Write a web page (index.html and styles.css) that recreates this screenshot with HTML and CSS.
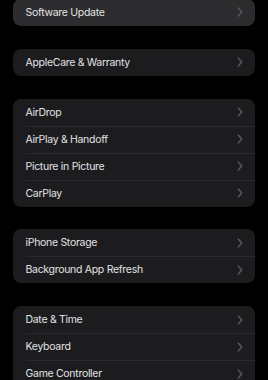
FILE: index.html
```html
<!DOCTYPE html>
<html lang="en">
<head>
<meta charset="utf-8">
<title>General</title>
<link rel="stylesheet" href="styles.css">
</head>
<body>
<main class="settings">
  <section class="group group--pressed">
    <div class="row"><span class="label">Software Update</span><svg class="chev" viewBox="0 0 6 10" width="6" height="10"><polyline points="1.2,1 4.8,5 1.2,9"/></svg></div>
  </section>
  <section class="group">
    <div class="row"><span class="label">AppleCare &amp; Warranty</span><svg class="chev" viewBox="0 0 6 10" width="6" height="10"><polyline points="1.2,1 4.8,5 1.2,9"/></svg></div>
  </section>
  <section class="group">
    <div class="row"><span class="label">AirDrop</span><svg class="chev" viewBox="0 0 6 10" width="6" height="10"><polyline points="1.2,1 4.8,5 1.2,9"/></svg></div>
    <div class="row"><span class="label">AirPlay &amp; Handoff</span><svg class="chev" viewBox="0 0 6 10" width="6" height="10"><polyline points="1.2,1 4.8,5 1.2,9"/></svg></div>
    <div class="row"><span class="label">Picture in Picture</span><svg class="chev" viewBox="0 0 6 10" width="6" height="10"><polyline points="1.2,1 4.8,5 1.2,9"/></svg></div>
    <div class="row"><span class="label">CarPlay</span><svg class="chev" viewBox="0 0 6 10" width="6" height="10"><polyline points="1.2,1 4.8,5 1.2,9"/></svg></div>
  </section>
  <section class="group">
    <div class="row"><span class="label">iPhone Storage</span><svg class="chev" viewBox="0 0 6 10" width="6" height="10"><polyline points="1.2,1 4.8,5 1.2,9"/></svg></div>
    <div class="row"><span class="label">Background App Refresh</span><svg class="chev" viewBox="0 0 6 10" width="6" height="10"><polyline points="1.2,1 4.8,5 1.2,9"/></svg></div>
  </section>
  <section class="group">
    <div class="row"><span class="label">Date &amp; Time</span><svg class="chev" viewBox="0 0 6 10" width="6" height="10"><polyline points="1.2,1 4.8,5 1.2,9"/></svg></div>
    <div class="row"><span class="label">Keyboard</span><svg class="chev" viewBox="0 0 6 10" width="6" height="10"><polyline points="1.2,1 4.8,5 1.2,9"/></svg></div>
    <div class="row"><span class="label">Game Controller</span><svg class="chev" viewBox="0 0 6 10" width="6" height="10"><polyline points="1.2,1 4.8,5 1.2,9"/></svg></div>
  </section>
</main>
</body>
</html>
```

FILE: styles.css
```css
html, body {
  margin: 0;
  padding: 0;
  background: #000;
  height: 100%;
  overflow: hidden;
}

.settings {
  display: flex;
  flex-direction: column;
  gap: 22.9px;
  padding: 0 13px;
  margin-top: -1.2px;
  font-family: Inter, "Liberation Sans", sans-serif;
  font-size: 10.5px;
  letter-spacing: -0.3px;
  color: #e2e2e4;
}

.group {
  background: #1c1c1e;
  border-radius: 8px;
  overflow: hidden;
}

.group--pressed {
  background: #2c2c2e;
}

.row {
  position: relative;
  height: 27px;
  display: flex;
  align-items: center;
  justify-content: space-between;
  padding: 0 12px 0 12.5px;
}

.row + .row::before {
  content: "";
  position: absolute;
  top: 0;
  left: 12.5px;
  right: 0;
  height: 1px;
  background: #2a2a2d;
}

.chev {
  display: block;
  fill: none;
  stroke: #5a5a5e;
  stroke-width: 1.4;
  stroke-linecap: round;
  stroke-linejoin: round;
}
```
